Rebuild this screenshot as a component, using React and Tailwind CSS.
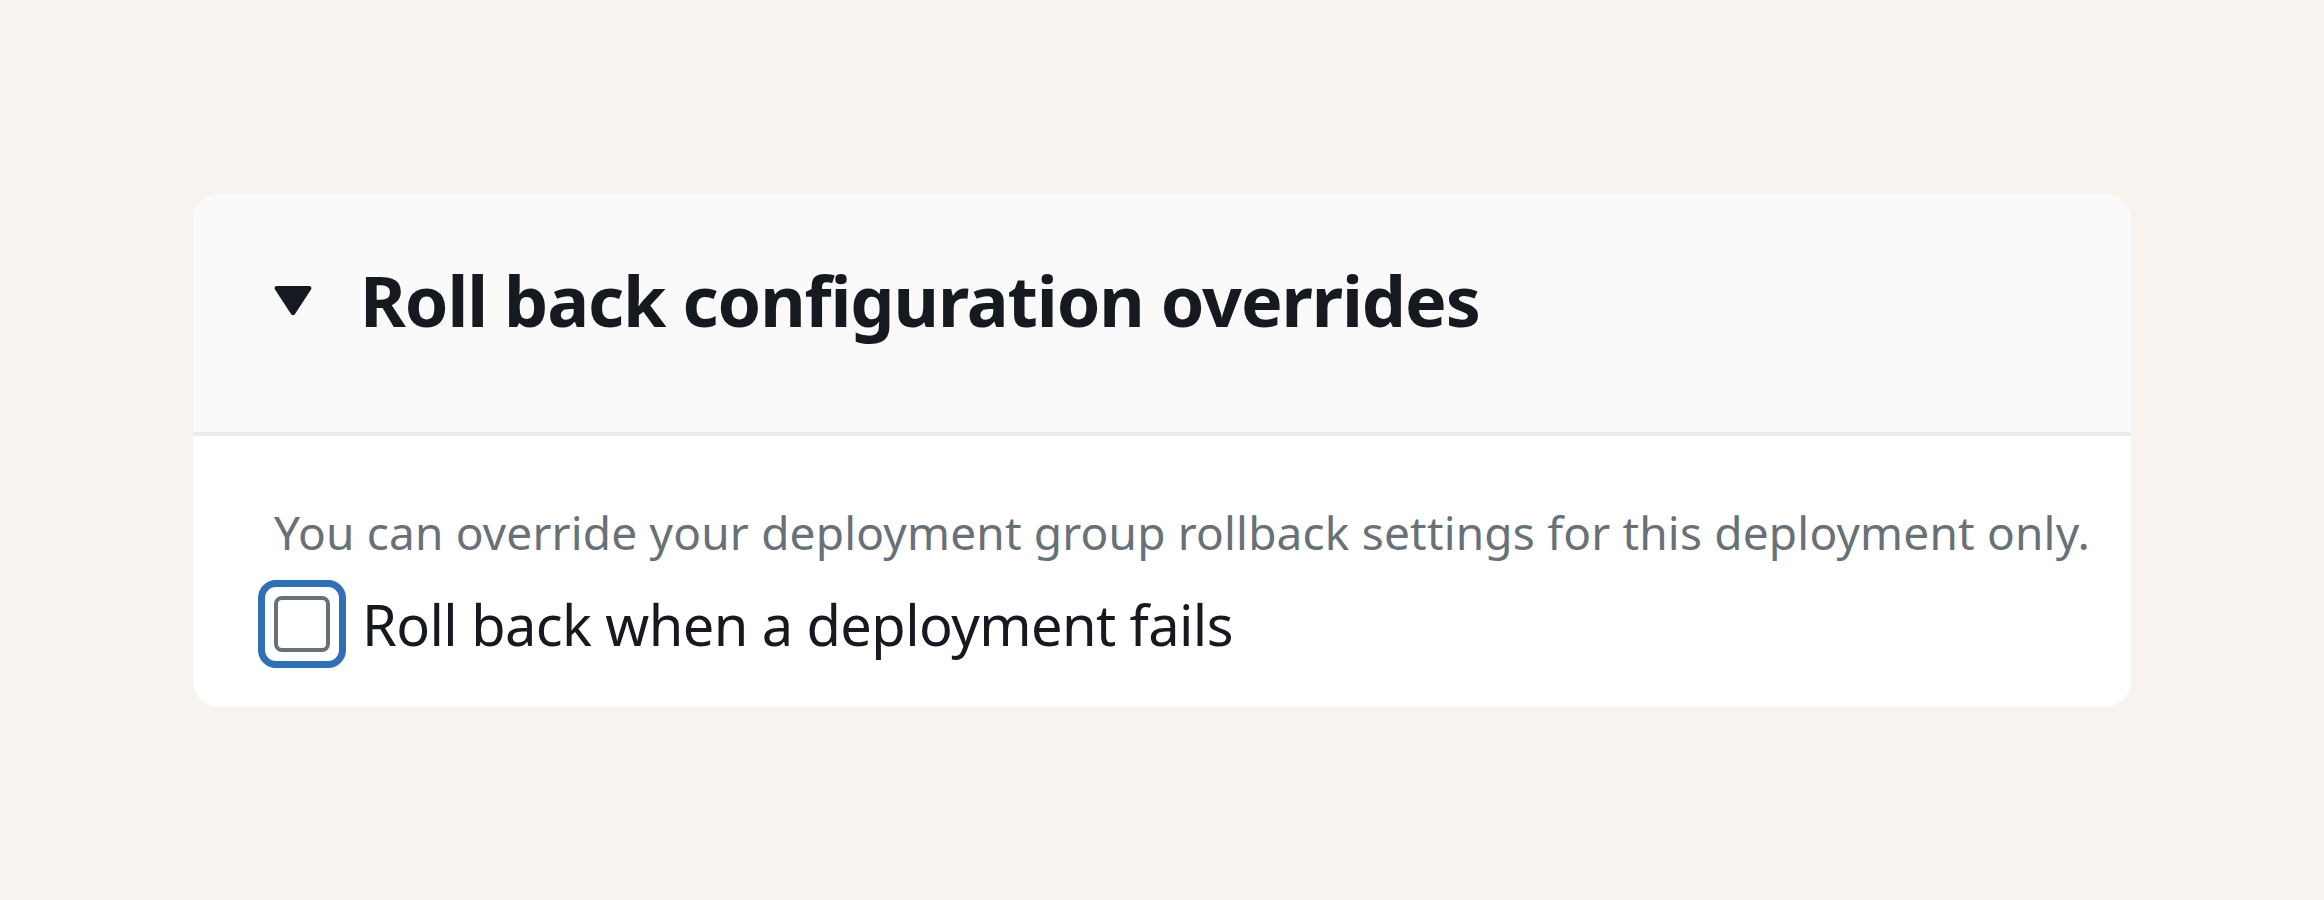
export default function App() {
  return (
    <div
      className="min-h-screen bg-[#f7f4ef] px-[193px] pt-[194px]"
      style={{ fontFamily: '"Noto Sans", "Open Sans", sans-serif' }}
    >
      <div className="rounded-[26px] bg-white overflow-hidden">
        <div className="flex h-[242px] items-center bg-[#fafafa] pl-[80px] border-b-[4px] border-[#e9ebed]">
          <div className="flex items-center gap-[47px] pb-[26px]">
            <svg width="40" height="31" viewBox="0 0 40 31" className="shrink-0">
              <path
                d="M4 1 H36 Q39.5 1 38 4.5 L22 29 Q20 31.5 18 29 L2 4.5 Q0.5 1 4 1 Z"
                fill="#16191f"
              />
            </svg>
            <h2 className="text-[70px] font-bold leading-none tracking-[-1.1px] text-[#16191f]">
              Roll back configuration overrides
            </h2>
          </div>
        </div>
        <div className="pl-[65px] pt-[66px] pb-[39px]">
          <p className="pl-[16px] text-[46px] leading-[60px] tracking-[0.18px] text-[#687078]">
            You can override your deployment group rollback settings for this deployment only.
          </p>
          <label className="mt-[18px] flex items-center gap-[16px]">
            <span className="flex h-[88px] w-[88px] items-center justify-center rounded-[18px] border-[7px] border-[#2f6fb7]">
              <span className="h-[56px] w-[56px] rounded-[8px] border-[4px] border-[#687078] bg-white" />
            </span>
            <span className="text-[56px] leading-none tracking-[-0.6px] text-[#16191f]">
              Roll back when a deployment fails
            </span>
          </label>
        </div>
      </div>
    </div>
  );
}
